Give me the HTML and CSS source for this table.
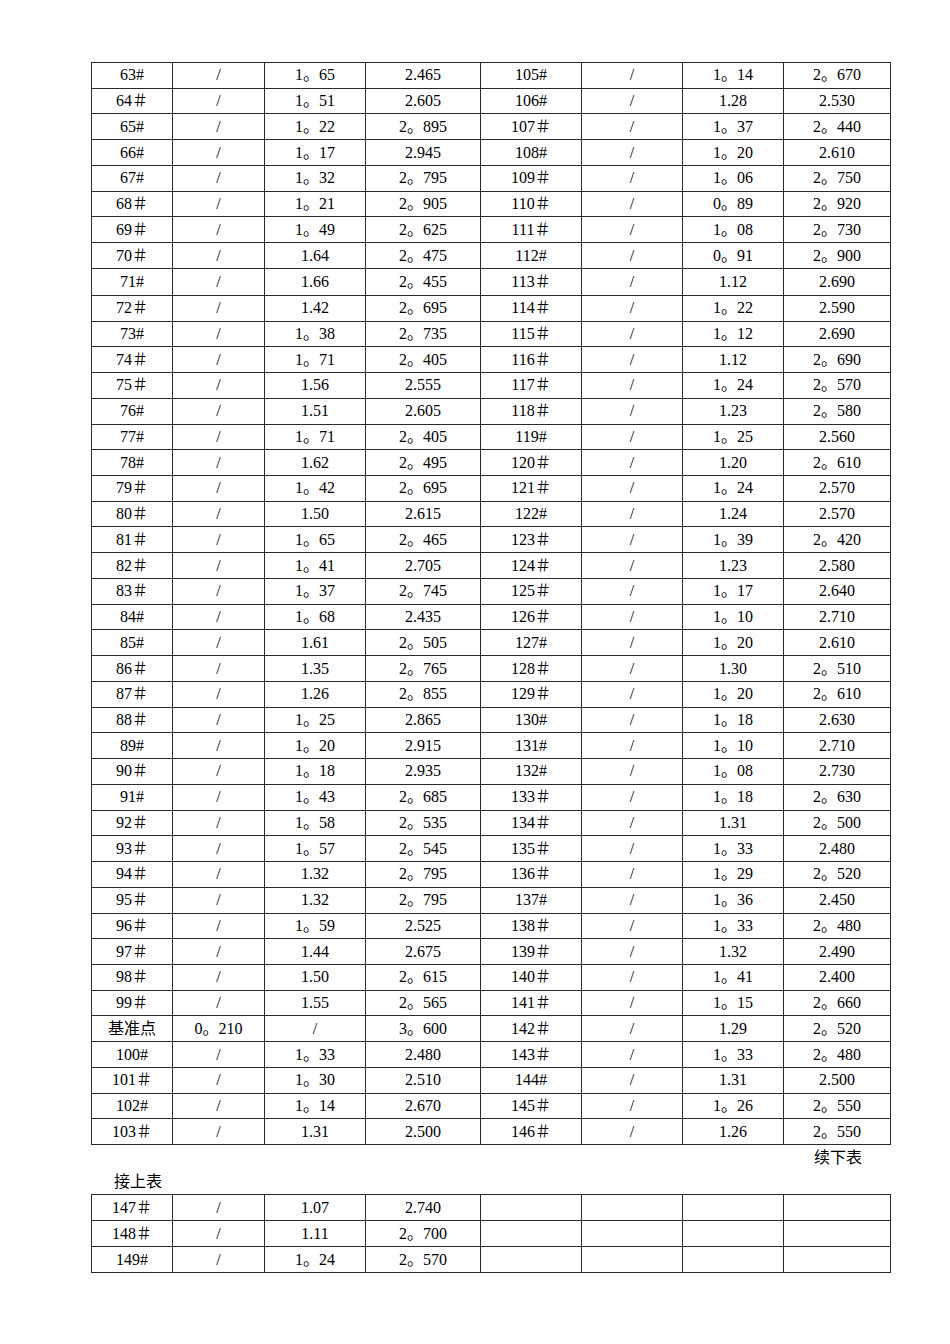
FILE: index.html
```html
<!DOCTYPE html>
<html lang="zh">
<head>
<meta charset="utf-8">
<title>表</title>
<link rel="stylesheet" href="styles.css">
</head>
<body>
<div class="page">
<table class="grid">
<colgroup><col class="c1"><col class="c2"><col class="c3"><col class="c4"><col class="c5"><col class="c6"><col class="c7"><col class="c8"></colgroup>
<tbody>
<tr><td>63#</td><td>/</td><td>1。65</td><td>2.465</td><td>105#</td><td>/</td><td>1。14</td><td>2。670</td></tr>
<tr><td>64＃</td><td>/</td><td>1。51</td><td>2.605</td><td>106#</td><td>/</td><td>1.28</td><td>2.530</td></tr>
<tr><td>65#</td><td>/</td><td>1。22</td><td>2。895</td><td>107＃</td><td>/</td><td>1。37</td><td>2。440</td></tr>
<tr><td>66#</td><td>/</td><td>1。17</td><td>2.945</td><td>108#</td><td>/</td><td>1。20</td><td>2.610</td></tr>
<tr><td>67#</td><td>/</td><td>1。32</td><td>2。795</td><td>109＃</td><td>/</td><td>1。06</td><td>2。750</td></tr>
<tr><td>68＃</td><td>/</td><td>1。21</td><td>2。905</td><td>110＃</td><td>/</td><td>0。89</td><td>2。920</td></tr>
<tr><td>69＃</td><td>/</td><td>1。49</td><td>2。625</td><td>111＃</td><td>/</td><td>1。08</td><td>2。730</td></tr>
<tr><td>70＃</td><td>/</td><td>1.64</td><td>2。475</td><td>112#</td><td>/</td><td>0。91</td><td>2。900</td></tr>
<tr class="tall"><td>71#</td><td>/</td><td>1.66</td><td>2。455</td><td>113＃</td><td>/</td><td>1.12</td><td>2.690</td></tr>
<tr><td>72＃</td><td>/</td><td>1.42</td><td>2。695</td><td>114＃</td><td>/</td><td>1。22</td><td>2.590</td></tr>
<tr><td>73#</td><td>/</td><td>1。38</td><td>2。735</td><td>115＃</td><td>/</td><td>1。12</td><td>2.690</td></tr>
<tr><td>74＃</td><td>/</td><td>1。71</td><td>2。405</td><td>116＃</td><td>/</td><td>1.12</td><td>2。690</td></tr>
<tr><td>75＃</td><td>/</td><td>1.56</td><td>2.555</td><td>117＃</td><td>/</td><td>1。24</td><td>2。570</td></tr>
<tr><td>76#</td><td>/</td><td>1.51</td><td>2.605</td><td>118＃</td><td>/</td><td>1.23</td><td>2。580</td></tr>
<tr><td>77#</td><td>/</td><td>1。71</td><td>2。405</td><td>119#</td><td>/</td><td>1。25</td><td>2.560</td></tr>
<tr><td>78#</td><td>/</td><td>1.62</td><td>2。495</td><td>120＃</td><td>/</td><td>1.20</td><td>2。610</td></tr>
<tr><td>79＃</td><td>/</td><td>1。42</td><td>2。695</td><td>121＃</td><td>/</td><td>1。24</td><td>2.570</td></tr>
<tr><td>80＃</td><td>/</td><td>1.50</td><td>2.615</td><td>122#</td><td>/</td><td>1.24</td><td>2.570</td></tr>
<tr><td>81＃</td><td>/</td><td>1。65</td><td>2。465</td><td>123＃</td><td>/</td><td>1。39</td><td>2。420</td></tr>
<tr><td>82＃</td><td>/</td><td>1。41</td><td>2.705</td><td>124＃</td><td>/</td><td>1.23</td><td>2.580</td></tr>
<tr><td>83＃</td><td>/</td><td>1。37</td><td>2。745</td><td>125＃</td><td>/</td><td>1。17</td><td>2.640</td></tr>
<tr><td>84#</td><td>/</td><td>1。68</td><td>2.435</td><td>126＃</td><td>/</td><td>1。10</td><td>2.710</td></tr>
<tr><td>85#</td><td>/</td><td>1.61</td><td>2。505</td><td>127#</td><td>/</td><td>1。20</td><td>2.610</td></tr>
<tr><td>86＃</td><td>/</td><td>1.35</td><td>2。765</td><td>128＃</td><td>/</td><td>1.30</td><td>2。510</td></tr>
<tr><td>87＃</td><td>/</td><td>1.26</td><td>2。855</td><td>129＃</td><td>/</td><td>1。20</td><td>2。610</td></tr>
<tr><td>88＃</td><td>/</td><td>1。25</td><td>2.865</td><td>130#</td><td>/</td><td>1。18</td><td>2.630</td></tr>
<tr><td>89#</td><td>/</td><td>1。20</td><td>2.915</td><td>131#</td><td>/</td><td>1。10</td><td>2.710</td></tr>
<tr><td>90＃</td><td>/</td><td>1。18</td><td>2.935</td><td>132#</td><td>/</td><td>1。08</td><td>2.730</td></tr>
<tr><td>91#</td><td>/</td><td>1。43</td><td>2。685</td><td>133＃</td><td>/</td><td>1。18</td><td>2。630</td></tr>
<tr><td>92＃</td><td>/</td><td>1。58</td><td>2。535</td><td>134＃</td><td>/</td><td>1.31</td><td>2。500</td></tr>
<tr><td>93＃</td><td>/</td><td>1。57</td><td>2。545</td><td>135＃</td><td>/</td><td>1。33</td><td>2.480</td></tr>
<tr><td>94＃</td><td>/</td><td>1.32</td><td>2。795</td><td>136＃</td><td>/</td><td>1。29</td><td>2。520</td></tr>
<tr><td>95＃</td><td>/</td><td>1.32</td><td>2。795</td><td>137#</td><td>/</td><td>1。36</td><td>2.450</td></tr>
<tr><td>96＃</td><td>/</td><td>1。59</td><td>2.525</td><td>138＃</td><td>/</td><td>1。33</td><td>2。480</td></tr>
<tr><td>97＃</td><td>/</td><td>1.44</td><td>2.675</td><td>139＃</td><td>/</td><td>1.32</td><td>2.490</td></tr>
<tr><td>98＃</td><td>/</td><td>1.50</td><td>2。615</td><td>140＃</td><td>/</td><td>1。41</td><td>2.400</td></tr>
<tr><td>99＃</td><td>/</td><td>1.55</td><td>2。565</td><td>141＃</td><td>/</td><td>1。15</td><td>2。660</td></tr>
<tr><td>基准点</td><td>0。210</td><td>/</td><td>3。600</td><td>142＃</td><td>/</td><td>1.29</td><td>2。520</td></tr>
<tr><td>100#</td><td>/</td><td>1。33</td><td>2.480</td><td>143＃</td><td>/</td><td>1。33</td><td>2。480</td></tr>
<tr><td>101＃</td><td>/</td><td>1。30</td><td>2.510</td><td>144#</td><td>/</td><td>1.31</td><td>2.500</td></tr>
<tr><td>102#</td><td>/</td><td>1。14</td><td>2.670</td><td>145＃</td><td>/</td><td>1。26</td><td>2。550</td></tr>
<tr><td>103＃</td><td>/</td><td>1.31</td><td>2.500</td><td>146＃</td><td>/</td><td>1.26</td><td>2。550</td></tr>
</tbody>
</table>
<p class="note next">续下表</p>
<p class="note prev">接上表</p>
<table class="grid second">
<colgroup><col class="c1"><col class="c2"><col class="c3"><col class="c4"><col class="c5"><col class="c6"><col class="c7"><col class="c8"></colgroup>
<tbody>
<tr><td>147＃</td><td>/</td><td>1.07</td><td>2.740</td><td></td><td></td><td></td><td></td></tr>
<tr><td>148＃</td><td>/</td><td>1.11</td><td>2。700</td><td></td><td></td><td></td><td></td></tr>
<tr><td>149#</td><td>/</td><td>1。24</td><td>2。570</td><td></td><td></td><td></td><td></td></tr>
</tbody>
</table>
</div>
</body>
</html>
```
FILE: styles.css
```css
html, body {
  margin: 0;
  padding: 0;
  background: #ffffff;
}
body {
  font-family: "Liberation Serif", "Noto Sans CJK SC", serif;
  font-size: 16px;
  color: #000000;
}
.page {
  padding-top: 62px;
  margin-left: 91px;
  width: 799px;
}
.grid {
  border-collapse: collapse;
  table-layout: fixed;
  width: 799px;
}
.grid td {
  border: 1px solid #2a2a2a;
  text-align: center;
  vertical-align: middle;
  padding: 0;
  line-height: 18px;
  white-space: nowrap;
}
.grid tr {
  height: 25.74px;
}
.grid tr.tall {
  height: 27px;
}
.second tr {
  height: 26px;
}
.c1 { width: 81px; }
.c2 { width: 92px; }
.c3 { width: 101px; }
.c4 { width: 115px; }
.c5 { width: 101px; }
.c6 { width: 101px; }
.c7 { width: 101px; }
.c8 { width: 107px; }
.note {
  margin: 0;
  height: 24px;
  line-height: 24px;
  font-size: 16px;
}
.next {
  text-align: right;
  padding-right: 28px;
  margin-top: 1px;
}
.prev {
  padding-left: 23px;
}
```
